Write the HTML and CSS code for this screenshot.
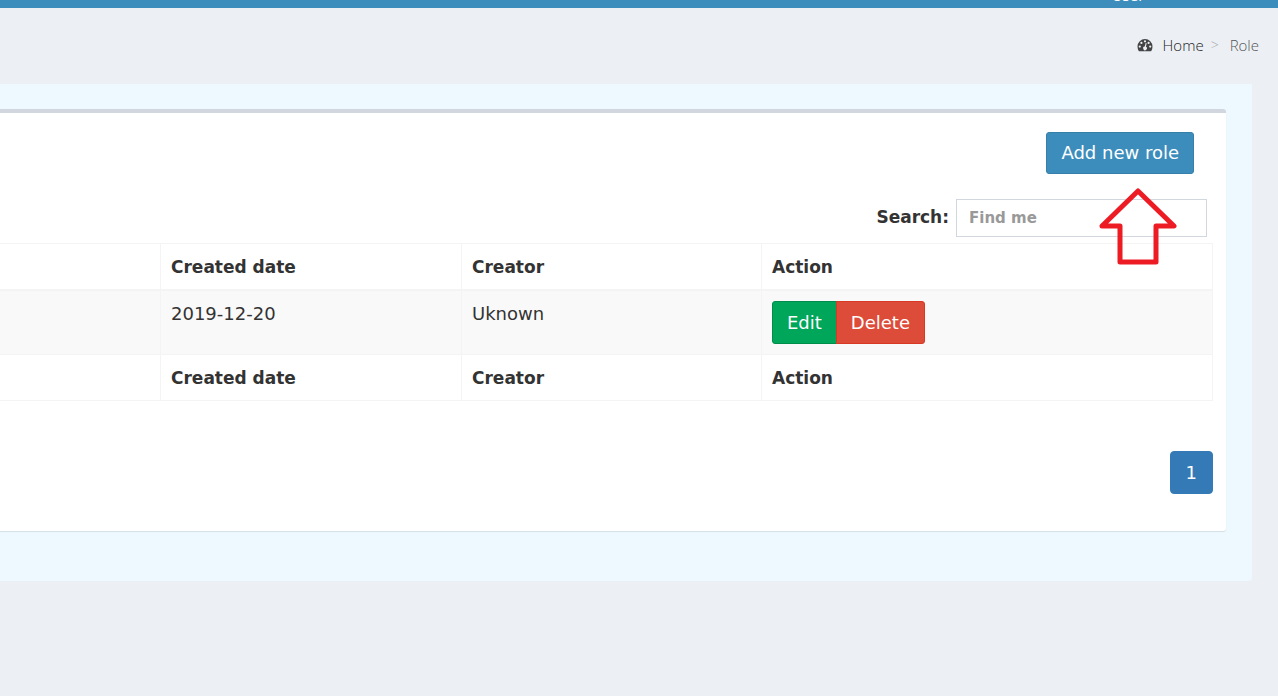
FILE: index.html
```
<!DOCTYPE html>
<html lang="en">
<head>
<meta charset="utf-8">
<title>Role</title>
<link rel="stylesheet" href="styles.css">
</head>
<body>
<header class="topbar"><span class="topbar-user">User</span></header>
<main class="content">
  <nav class="breadcrumb" aria-label="Breadcrumb">
    <a class="crumb-home" href="#">
      <svg class="gauge" viewBox="0 0 16 14" aria-hidden="true">
        <path fill="#444" d="M8 1a7.5 7.5 0 0 0-7.5 7.5q0 2.3 1.1 4.2.3.5.8.5h11.2q.5 0 .8-.5 1.1-1.9 1.1-4.2A7.5 7.5 0 0 0 8 1z"/>
        <g fill="#ecf0f5"><circle cx="8" cy="3.3" r="1.1"/><circle cx="4.4" cy="4.9" r="1.1"/><circle cx="2.8" cy="8.6" r="1.1"/><circle cx="11.6" cy="4.9" r="1.1"/><circle cx="13.2" cy="8.6" r="1.1"/><path d="M8.7 5l1 .2-.8 3.6a1.8 1.8 0 1 1-1.2-.2z"/></g>
      </svg>Home</a>
    <span class="crumb-sep">&gt;</span>
    <span class="crumb-current">Role</span>
  </nav>
  <section class="panel">
    <div class="box">
      <div class="toolbar"><button class="btn btn-primary" type="button">Add new role</button></div>
      <div class="search">
        <label for="search">Search:</label>
        <input id="search" type="text" placeholder="Find me">
      </div>
      <table class="roles">
        <colgroup><col class="col-first"><col class="col-date"><col class="col-creator"><col></colgroup>
        <thead><tr><td></td><th scope="col">Created date</th><th scope="col">Creator</th><th scope="col">Action</th></tr></thead>
        <tbody><tr><td></td><td>2019-12-20</td><td>Uknown</td><td><div class="btn-group"><button class="btn btn-success" type="button">Edit</button><button class="btn btn-danger" type="button">Delete</button></div></td></tr></tbody>
        <tfoot><tr><td></td><th>Created date</th><th>Creator</th><th>Action</th></tr></tfoot>
      </table>
      <nav class="pagination" aria-label="Pages"><a class="page" href="#">1</a></nav>
    </div>
  </section>
</main>
<svg class="arrow" viewBox="0 0 78 78" aria-hidden="true"><path d="M39 3L75 38H57V74H21V38H3z"/></svg>
</body>
</html>
```
FILE: styles.css
```
* { box-sizing: border-box; }
body {
  margin: 0;
  min-height: 100vh;
  position: relative;
  background: #ecf0f5;
  color: #333;
  font: 18px/26px "DejaVu Sans", Verdana, sans-serif;
}
.topbar {
  display: flex;
  justify-content: flex-end;
  align-items: flex-end;
  height: 8px;
  padding-right: 134px;
  overflow: hidden;
  background: #3c8dbc;
  color: #fff;
  font-size: 14px;
  line-height: 20px;
}
.topbar-user { padding-bottom: 2px; }
.content { padding-right: 26px; }
.breadcrumb {
  display: flex;
  justify-content: flex-end;
  align-items: center;
  height: 76px;
  padding-bottom: 2px;
  margin-right: -7px;
  font-family: "Open Sans", sans-serif;
  font-size: 15px;
  font-weight: 300;
}
.crumb-home {
  display: flex;
  align-items: center;
  color: #222;
  text-decoration: none;
}
.gauge { width: 16px; height: 14px; margin-right: 10px; }
.crumb-sep { margin: 0 11px 0 7px; color: #aaa; font-size: 14px; }
.crumb-current { color: #555; }
.panel {
  padding: 25px 26px 50px 0;
  background: #edf8ff;
  border-radius: 0 0 4px 0;
}
.box {
  padding: 19px 13px 37px 0;
  border-top: 4px solid #d2d6de;
  border-radius: 0 3px 3px 0;
  background: #fff;
  box-shadow: 0 1px 1px rgba(0, 0, 0, .1);
}
.toolbar { display: flex; justify-content: flex-end; padding-right: 19px; }
.btn {
  height: 42px;
  padding: 0 14px;
  border: 1px solid;
  border-radius: 3px;
  color: #fff;
  font: inherit;
}
.btn-primary { background: #3c8dbc; border-color: #367fa9; }
.btn-success { background: #00a65a; border-color: #008d4c; border-radius: 3px 0 0 3px; }
.btn-danger { background: #dd4b39; border-color: #d73925; border-radius: 0 3px 3px 0; margin-left: -1px; }
.btn-group { display: flex; }
.btn-group .btn { height: 43px; }
.search {
  display: flex;
  justify-content: flex-end;
  gap: 7px;
  margin: 25px 6px 6px 0;
}
.search label { font-size: 17px; font-weight: 700; line-height: 36px; }
.search input {
  width: 251px;
  height: 38px;
  padding: 0 12px;
  border: 1px solid #d2d6de;
  background: #fff;
  color: #555;
  font: 700 15px "DejaVu Sans", Verdana, sans-serif;
}
.search input::placeholder { color: #999; opacity: 1; }
.roles {
  width: 100%;
  table-layout: fixed;
  border-collapse: separate;
  border-spacing: 0;
  border-top: 1px solid #f4f4f4;
}
.col-first { width: 161px; }
.col-date { width: 301px; }
.col-creator { width: 300px; }
.roles th, .roles td {
  padding: 10px 10px 9px;
  border: 0 solid #f4f4f4;
  border-width: 0 1px 1px 0;
  text-align: left;
  vertical-align: top;
}
.roles th { font-size: 17px; }
.roles thead th, .roles thead td { border-bottom-width: 2px; }
.roles tbody td { background: #f9f9f9; padding-bottom: 10px; }
.pagination { display: flex; justify-content: flex-end; margin-top: 50px; }
.page {
  padding: 8px 15px 7px;
  border: 1px solid #337ab7;
  border-radius: 4px;
  background: #337ab7;
  color: #fff;
  text-decoration: none;
}
.arrow {
  position: absolute;
  top: 188px;
  right: 101px;
  width: 78px;
  height: 78px;
  fill: none;
  stroke: #ed1c24;
  stroke-width: 5;
  stroke-linejoin: round;
  pointer-events: none;
}
```
